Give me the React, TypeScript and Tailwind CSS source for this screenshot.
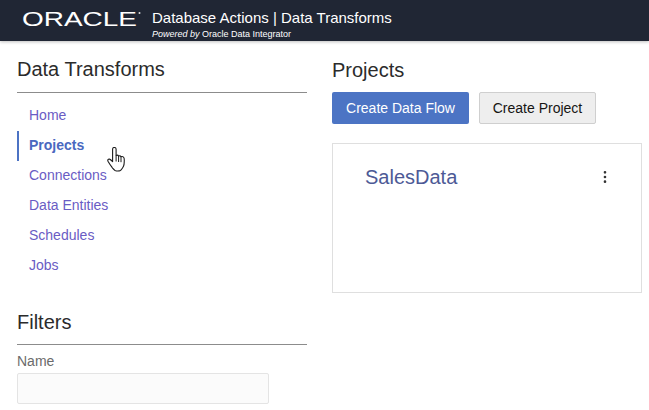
import { MoreVertical } from "lucide-react";

const links = ["Home", "Projects", "Connections", "Data Entities", "Schedules", "Jobs"];

function HandCursor() {
  return (
    <svg className="absolute left-[107px] top-[147px]" width="19" height="25" viewBox="0 0 19 25">
      <path
        d="M7.500.500c1 0 1.600.7 1.600 1.700V8.500c1-.5 2-.4 2.500.5.900-.4 2-.2 2.400.7 1-.4 2.500 0 3 1.200.3 1 .2 5 0 6.800-.2 1.300-.8 2.400-1.500 3.300-.8 1-1.200 2-2 2.500-1.500.6-4 .5-5.500-.1-1.300-.6-1.800-1.500-2.500-2.400-1.300-1.800-3-4-4.500-6.800-.6-1.200.2-2.300 1.400-2.100 1 .2 2 1.200 3.200 2.600V2.200c0-1 .4-1.700 1.400-1.700z"
        fill="#fff"
        stroke="#1c1c1c"
        strokeWidth="1.100"
        strokeLinejoin="round"
      />
      <path d="M9.100 8.500v6M11.600 9v6M14 9.700v5.500" stroke="#1c1c1c" strokeWidth="1" fill="none" />
    </svg>
  );
}

function OracleLogo() {
  return (
    <svg width="122" height="24" viewBox="0 0 122 24" className="shrink-0">
      <text
        x="0"
        y="17"
        fill="#fff"
        fontFamily="'Liberation Sans', sans-serif"
        fontSize="20"
        textLength="115"
        lengthAdjust="spacingAndGlyphs"
      >
        ORACLE
      </text>
      <circle cx="117.500" cy="4" r="1" fill="#ddd" />
    </svg>
  );
}

export default function App() {
  return (
    <div className="h-[410px] w-[649px] overflow-hidden bg-white font-['Liberation_Sans',Arial,sans-serif] relative">
      <header className="flex h-[41px] items-start bg-[#202634] pl-[22px] shadow-[0_1px_3px_rgba(0,0,0,0.25)]">
        <div className="mt-[9px]">
          <OracleLogo />
        </div>
        <div className="ml-[8px] mt-[9px] text-white">
          <div className="text-[15px] leading-[18px]">Database Actions | Data Transforms</div>
          <div className="mt-[2px] text-[9px] leading-[10px]">
            <span className="italic">Powered by</span> Oracle Data Integrator
          </div>
        </div>
      </header>

      <div className="flex pl-[17px]">
        <aside className="w-[290px] shrink-0">
          <h2 className="mt-[17px] text-[20px] leading-[23px] text-[#2b2b2b]">Data Transforms</h2>
          <div className="mt-[11px] h-px bg-[#8c8c8c]" />
          <nav className="mt-[8px] flex flex-col">
            {links.map((l) =>
              l === "Projects" ? (
                <a key={l} className="flex h-[30px] items-center border-l-2 border-[#4c73c4] pb-[2px] pl-[10px] text-[14px] font-bold text-[#4a68c0]">
                  {l}
                </a>
              ) : (
                <a key={l} className="flex h-[30px] items-center pb-[2px] pl-[12px] text-[14px] text-[#6a5cc4]">
                  {l}
                </a>
              ),
            )}
          </nav>
          <h2 className="mt-[30px] text-[20px] leading-[23px] text-[#2b2b2b]">Filters</h2>
          <div className="mt-[10px] h-px bg-[#8c8c8c]" />
          <label className="mt-[8px] block text-[14px] leading-[16px] text-[#6b6b6b]">Name</label>
          <div className="mt-[4px] h-[31px] w-[252px] rounded-[2px] border border-[#e4e4e4] bg-[#fbfbfb]" />
        </aside>

        <main className="ml-[25px] w-[310px] shrink-0">
          <h2 className="mt-[18px] text-[20px] leading-[23px] text-[#2b2b2b]">Projects</h2>
          <div className="mt-[10px] flex gap-[10px]">
            <button className="h-[32px] w-[137px] rounded-[2px] bg-[#4c74c4] text-[14px] text-white">Create Data Flow</button>
            <button className="h-[32px] w-[117px] rounded-[2px] border border-[#cfcfcf] bg-[#eeeeee] text-[14px] text-[#161513]">Create Project</button>
          </div>
          <div className="mt-[19px] flex h-[150px] items-start justify-between border border-[#dfdfdf] pl-[32px] pr-[28px] pt-[22px]">
            <span className="text-[20px] leading-[23px] text-[#4d5a96]">SalesData</span>
            <MoreVertical className="mt-[3px] h-[16px] w-[16px] text-[#333]" strokeWidth={2} />
          </div>
        </main>
      </div>

      <HandCursor />
    </div>
  );
}
